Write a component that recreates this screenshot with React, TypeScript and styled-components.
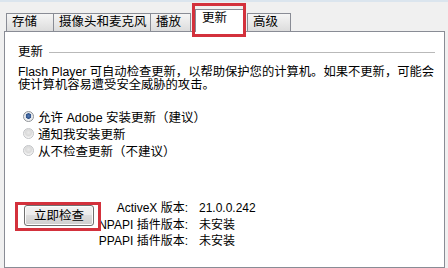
import React from 'react';
import styled, { createGlobalStyle } from 'styled-components';

const GlobalStyle = createGlobalStyle`
    html, body {
        margin: 0;
        padding: 0;
        background: #f0f0f0;
    }
    body {
        font-family: Tahoma, 'Liberation Sans', 'Noto Sans CJK SC', sans-serif;
        font-size: 12px;
        color: #000;
    }
`;

const Window = styled.div`
    width: 448px;
    height: 268px;
    box-sizing: border-box;
    overflow: hidden;
    background: #f0f0f0;
    border-top: 2px solid #dbe5ee;
    padding: 0 3px 0 4px;
    display: flex;
    flex-direction: column;
`;

const TabBar = styled.div`
    height: 30px;
    padding-left: 2px;
    display: flex;
    align-items: flex-end;
    margin-bottom: -1px;
    font-size: 12.5px;
`;

const Tab = styled.div<{ w: number; active?: boolean; gap?: number }>`
    position: relative;
    box-sizing: border-box;
    width: ${(p) => p.w}px;
    margin-left: ${(p) => (p.gap === undefined ? -1 : p.gap)}px;
    border: 1px solid #898c95;
    border-bottom: none;
    padding-left: 5px;
    white-space: nowrap;
    ${(p) =>
        p.active
            ? `
        z-index: 1;
        height: 23px;
        background: #fff;
        line-height: 17px;
        padding-left: 6px;
    `
            : `
        height: 18px;
        margin-bottom: 1px;
        line-height: 17px;
        background: linear-gradient(#f5f5f5, #e9e9e9 50%, #dcdcdc);
    `}

    &::after {
        content: '';
        display: ${(p) => (p.active ? 'block' : 'none')};
        position: absolute;
        top: -7px;
        left: -4px;
        right: -3px;
        bottom: -5px;
        border: 3px solid #d3313c;
        pointer-events: none;
    }
`;

const Panel = styled.div`
    flex: 1;
    background: #fff;
    border: 1px solid #898c95;
    padding: 13px 9px 0 13px;
    display: flex;
    flex-direction: column;
`;

const GroupHeader = styled.div`
    display: flex;
    align-items: center;
    gap: 6px;
    line-height: 14px;
    font-size: 12.5px;
`;

const GroupLine = styled.div`
    flex: 1;
    height: 1px;
    background: #b9b9b9;
    margin-top: 1px;
`;

const Description = styled.p`
    margin: 7px 0 0;
    line-height: 13px;
    font-size: 12.3px;
    white-space: nowrap;
`;

const RadioList = styled.div`
    margin: 16px 0 0 5px;
    display: flex;
    flex-direction: column;
    font-size: 12.5px;
`;

const RadioRow = styled.label`
    display: flex;
    align-items: center;
    gap: 4px;
    height: 17px;
`;

const RadioDot = styled.span<{ checked?: boolean }>`
    width: 11px;
    height: 11px;
    box-sizing: border-box;
    border-radius: 50%;
    border: 1px solid ${(p) => (p.checked ? '#8e9297' : '#c2c4c7')};
    background: ${(p) =>
        p.checked
            ? 'radial-gradient(circle at 50% 45%, #5a7fb8 0, #2c4f86 2.5px, #dfe3e8 3px, #f7f7f7 5px)'
            : 'radial-gradient(circle at 50% 40%, #e9e9e9 0, #dadada 3px, #f6f6f6 5px)'};
`;

const BottomRow = styled.div`
    margin-top: 41px;
    padding-left: 6px;
    display: flex;
    align-items: flex-start;
`;

const Highlight = styled.div`
    position: relative;
    margin-top: 5px;

    &::after {
        content: '';
        position: absolute;
        top: -3px;
        left: -9px;
        right: -7px;
        bottom: -5px;
        border: 3px solid #d3313c;
        pointer-events: none;
    }
`;

const Button = styled.button`
    width: 70px;
    height: 21px;
    padding: 0;
    border: 1px solid #707070;
    border-radius: 3px;
    font: inherit;
    font-size: 12.5px;
    color: #000;
    line-height: 18px;
    background: linear-gradient(#f2f2f2, #ebebeb 50%, #dddddd 50%, #cfcfcf);
    box-shadow: inset 0 0 0 1px #fcfcfc;
`;

const VersionGrid = styled.div`
    display: grid;
    grid-template-columns: 94px auto;
    column-gap: 11px;
    line-height: 16.5px;
    white-space: nowrap;
`;

const VersionLabel = styled.span`
    text-align: right;
`;

const tabs = [
    { label: '存储', w: 48 },
    { label: '摄像头和麦克风', w: 98 },
    { label: '播放', w: 41 },
    { label: '更新', w: 49, active: true, gap: 4 },
    { label: '高级', w: 44, gap: 3 },
];

const options = [
    { label: '允许 Adobe 安装更新（建议）', checked: true },
    { label: '通知我安装更新' },
    { label: '从不检查更新（不建议）' },
];

const versions = [
    ['ActiveX 版本:', '21.0.0.242'],
    ['NPAPI 插件版本:', '未安装'],
    ['PPAPI 插件版本:', '未安装'],
];

export default function App() {
    return (
        <>
            <GlobalStyle />
            <Window>
                <TabBar>
                    {tabs.map((t, i) => (
                        <Tab key={t.label} w={t.w} active={t.active} gap={i === 0 ? 0 : t.gap}>
                            {t.label}
                        </Tab>
                    ))}
                </TabBar>
                <Panel>
                    <GroupHeader>
                        <span>更新</span>
                        <GroupLine />
                    </GroupHeader>
                    <Description>
                        Flash Player 可自动检查更新，以帮助保护您的计算机。如果不更新，可能会
                        <br />
                        使计算机容易遭受安全威胁的攻击。
                    </Description>
                    <RadioList>
                        {options.map((o) => (
                            <RadioRow key={o.label}>
                                <RadioDot checked={o.checked} />
                                <span>{o.label}</span>
                            </RadioRow>
                        ))}
                    </RadioList>
                    <BottomRow>
                        <Highlight>
                            <Button>立即检查</Button>
                        </Highlight>
                        <VersionGrid>
                            {versions.map(([k, v]) => (
                                <React.Fragment key={k}>
                                    <VersionLabel>{k}</VersionLabel>
                                    <span>{v}</span>
                                </React.Fragment>
                            ))}
                        </VersionGrid>
                    </BottomRow>
                </Panel>
            </Window>
        </>
    );
}
